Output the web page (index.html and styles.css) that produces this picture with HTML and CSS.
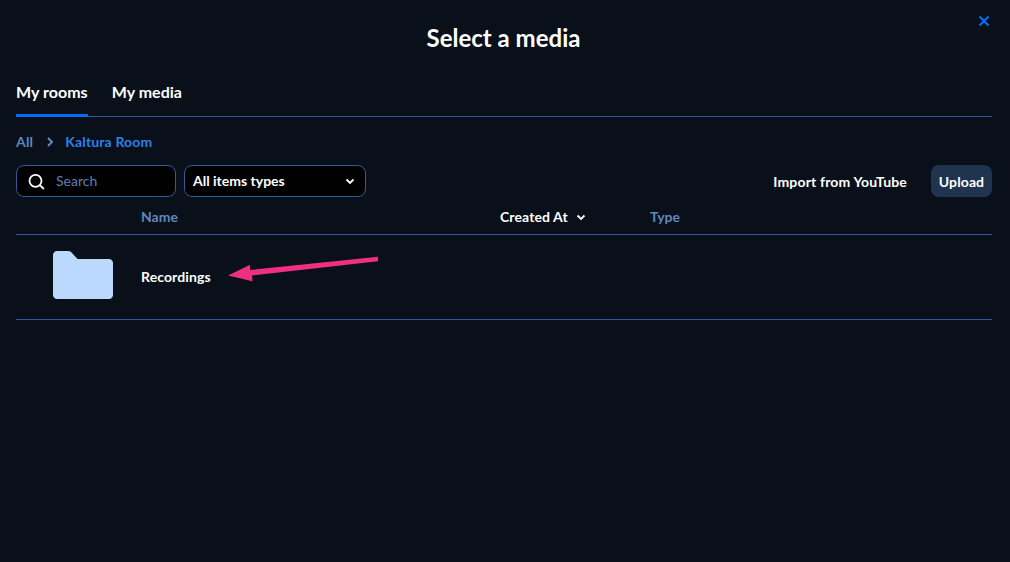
FILE: index.html
```html
<!DOCTYPE html>
<html lang="en">
<head>
<meta charset="utf-8">
<title>Select a media</title>
<link rel="stylesheet" href="styles.css">
</head>
<body>
<main class="modal">
  <button class="close" aria-label="Close">
    <svg width="12" height="12" viewBox="0 0 12 12"><path d="M1.500 1.500l9 9M10.500 1.500l-9 9" stroke="#006efa" stroke-width="2.200" fill="none"/></svg>
  </button>
  <h1 class="title">Select a media</h1>
  <nav class="tabs">
    <div class="tab active">My rooms</div>
    <div class="tab">My media</div>
  </nav>
  <div class="crumbs">
    <span class="crumb-root">All</span>
    <svg class="crumb-sep" width="8" height="10" viewBox="0 0 8 10"><path d="M2 1l4 4-4 4" stroke="#6a8fc8" stroke-width="1.800" fill="none"/></svg>
    <span class="crumb-current">Kaltura Room</span>
  </div>
  <div class="toolbar">
    <div class="search">
      <svg width="18" height="18" viewBox="0 0 18 18"><circle cx="7.500" cy="8.800" r="6" stroke="#fff" stroke-width="1.800" fill="none"/><path d="M11.900 13.200l3.900 3.800" stroke="#fff" stroke-width="1.800" fill="none"/></svg>
      <span class="placeholder">Search</span>
    </div>
    <div class="select">
      <span class="select-label">All items types</span>
      <svg width="10" height="7" viewBox="0 0 10 7"><path d="M1.500 1.500L5 5l3.500-3.500" stroke="#fff" stroke-width="1.800" fill="none"/></svg>
    </div>
    <div class="actions">
      <span class="import">Import from YouTube</span>
      <span class="upload">Upload</span>
    </div>
  </div>
  <div class="thead">
    <span class="col-name">Name</span>
    <span class="col-date">Created At<svg width="10" height="7" viewBox="0 0 10 7"><path d="M1.500 1.500L5 5l3.500-3.500" stroke="#fff" stroke-width="1.800" fill="none"/></svg></span>
    <span class="col-type">Type</span>
  </div>
  <div class="row">
    <div class="thumb">
      <svg width="60" height="48" viewBox="0 0 60 48"><path d="M4 0h11c2 0 3 .8 4 2l5.500 6H56c2.200 0 4 1.800 4 4v32c0 2.200-1.800 4-4 4H4c-2.200 0-4-1.800-4-4V4c0-2.200 1.800-4 4-4z" fill="#bbd8ff"/></svg>
    </div>
    <span class="row-name">Recordings</span>
  </div>
  <svg class="arrow" width="160" height="30" viewBox="0 0 160 30"><path d="M150 1.800L22 15 22 9.800 0 20.500 24.500 26.200 24 20.500 150 6.200z" fill="#ee2f82"/></svg>
</main>
</body>
</html>
```
FILE: styles.css
```css
* { box-sizing: border-box; }
html, body { margin: 0; height: 100%; }
body {
  background: #091019;
  color: #fff;
  font-family: Lato, "Liberation Sans", sans-serif;
  font-weight: 700;
  overflow: hidden;
}
.modal { position: relative; height: 562px; padding: 0 18px 0 16px; }
.close {
  position: absolute; top: 15px; right: 20px;
  width: 12px; height: 12px; padding: 0;
  background: none; border: 0; display: flex;
}
.title {
  margin: 0; padding: 21px 1px 0 0;
  font-size: 24px; line-height: 34px; font-weight: 700;
  text-align: center;
}
.tabs {
  display: flex; gap: 24px;
  margin-top: 22px; height: 40px;
  border-bottom: 1px solid #2f5a9e;
}
.tab { font-size: 16px; line-height: 24px; padding-top: 3px; height: 40px; letter-spacing: .03px; }
.tab.active { border-bottom: 3px solid #006efa; }
.crumbs {
  display: flex; align-items: center; height: 20px;
  margin-top: 15px; font-size: 14px; line-height: 20px;
}
.crumb-root { color: #5f86bf; letter-spacing: .2px; }
.crumb-sep { margin: 0 11px 0 13px; }
.crumb-current { color: #2f7fe8; letter-spacing: .15px; }
.toolbar { display: flex; gap: 8px; margin-top: 13px; height: 32px; }
.search, .select {
  display: flex; align-items: center; height: 32px;
  background: #000; border: 1px solid #2f5a9e; border-radius: 8px;
}
.search { width: 160px; padding-left: 11px; gap: 10px; }
.placeholder { color: #5f7fb5; font-size: 14px; font-weight: 400; padding-bottom: 2px; }
.select {
  width: 182px; padding: 0 10px 0 8px;
  justify-content: space-between; font-size: 14px;
}
.select-label { padding-bottom: 2px; }
.actions { margin-left: auto; display: flex; align-items: center; gap: 24px; font-size: 14px; }
.import { letter-spacing: .16px; }
.upload {
  display: flex; align-items: center; justify-content: center;
  width: 61px; height: 32px; background: #203450; border-radius: 8px;
  letter-spacing: .1px;
}
.thead {
  display: grid; grid-template-columns: 125px 359px 150px 1fr;
  height: 38px; padding-top: 10px;
  border-bottom: 1px solid #2f5a9e; font-size: 14px; line-height: 20px;
}
.col-name { grid-column: 2; color: #5f86bf; }
.col-date { grid-column: 3; letter-spacing: .1px; }
.col-date svg { margin-left: 8px; vertical-align: 1px; }
.col-type { grid-column: 4; color: #5f86bf; }
.row {
  display: flex; align-items: center; height: 85px; padding-bottom: 2px;
  border-bottom: 1px solid #2f5a9e;
}
.thumb { width: 125px; padding-left: 37px; margin-bottom: 2px; display: flex; }
.row-name { font-size: 14px; letter-spacing: .1px; }
.arrow { position: absolute; left: 228px; top: 255px; }
```
